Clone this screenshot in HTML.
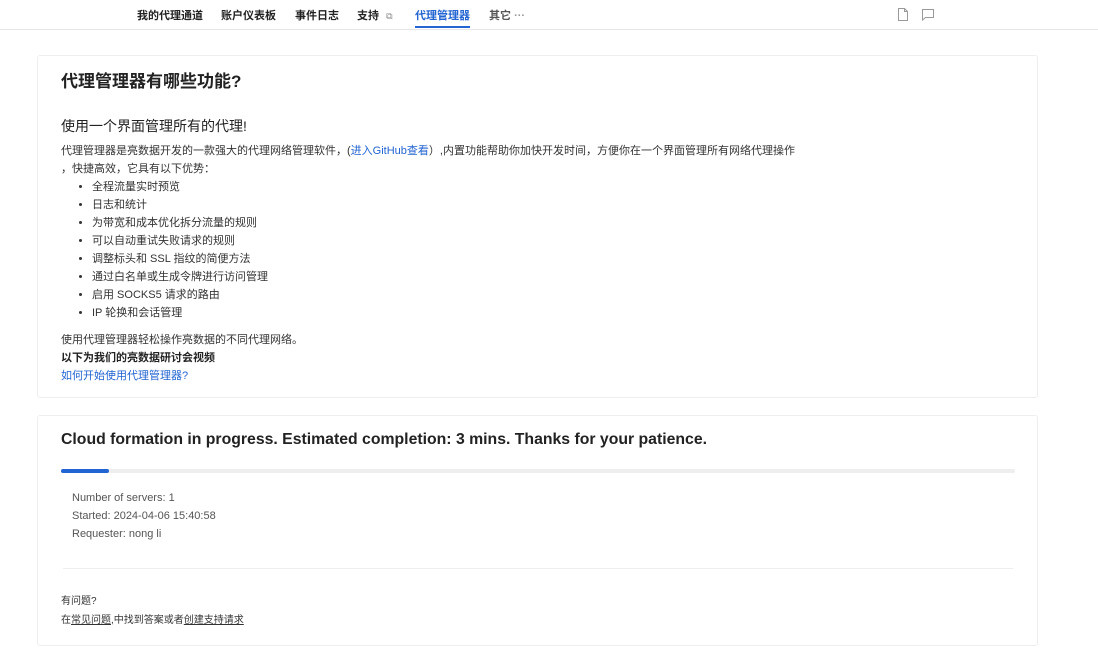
<!DOCTYPE html>
<html><head><meta charset="utf-8"><style>
*{margin:0;padding:0;box-sizing:border-box}
body{width:1098px;height:653px;overflow:hidden;background:#fff;font-family:"Liberation Sans","Noto Sans CJK SC",sans-serif;color:#333;position:relative}
.nav{height:30px;border-bottom:1px solid #e6e6e6;position:relative}
.nav span{position:absolute;top:7px;font-size:11px;color:#222;font-weight:bold}
.nav .act{color:#2264d1}
.card{position:absolute;left:37px;width:1001px;border:1px solid #eee;border-radius:3px;background:#fff}
h1{font-size:17px;font-weight:bold;color:#222;position:absolute;left:23px}
.t{position:absolute;font-size:11px;color:#333;white-space:nowrap}
a{color:#2264d1;text-decoration:none}
ul{position:absolute;left:54px;top:122px;font-size:11px;line-height:18px;list-style:disc;color:#333}
</style></head><body>
<div class="nav">
<span style="left:137px">我的代理通道</span>
<span style="left:221px">账户仪表板</span>
<span style="left:295px">事件日志</span>
<span style="left:357px">支持 <span style="position:static;font-size:9px;color:#888;margin-left:4px;font-weight:normal">⧉</span></span>
<span class="act" style="left:415px">代理管理器</span>
<div style="position:absolute;left:415px;top:26px;width:55px;height:2px;background:#2264d1"></div>
<span style="left:489px;color:#555">其它 <span style="position:static;color:#999">···</span></span>
<svg style="position:absolute;left:897px;top:8px" width="12" height="13" viewBox="0 0 12 13" fill="none" stroke="#999"><path d="M1.5 .5h6l3 3v9h-9z M7.5 .5v3h3"/></svg>
<svg style="position:absolute;left:922px;top:9px" width="13" height="12" viewBox="0 0 13 12" fill="none" stroke="#999"><path d="M.5 .5h11v8h-8l-3 2.5z"/></svg>
</div>
<div class="card" style="top:55px;height:343px">
<h1 style="top:11px">代理管理器有哪些功能?</h1>
<div class="t" style="left:23px;top:60px;font-size:14px;color:#222">使用一个界面管理所有的代理!</div>
<div class="t" style="left:23px;top:86px">代理管理器是亮数据开发的一款强大的代理网络管理软件，(<a>进入GitHub查看</a>）,内置功能帮助你加快开发时间，方便你在一个界面管理所有网络代理操作</div>
<div class="t" style="left:23px;top:104px">，快捷高效，它具有以下优势：</div>
<ul><li>全程流量实时预览</li><li>日志和统计</li><li>为带宽和成本优化拆分流量的规则</li><li>可以自动重试失败请求的规则</li><li>调整标头和 SSL 指纹的简便方法</li><li>通过白名单或生成令牌进行访问管理</li><li>启用 SOCKS5 请求的路由</li><li>IP 轮换和会话管理</li></ul>
<div class="t" style="left:23px;top:275px">使用代理管理器轻松操作亮数据的不同代理网络。</div>
<div class="t" style="left:23px;top:293px;font-weight:bold;color:#222">以下为我们的亮数据研讨会视频</div>
<div class="t" style="left:23px;top:311px"><a>如何开始使用代理管理器?</a></div>
</div>
<div class="card" style="top:415px;height:231px">
<h1 style="top:15px;font-size:15.8px">Cloud formation in progress. Estimated completion: 3 mins. Thanks for your patience.</h1>
<div style="position:absolute;left:23px;top:53px;width:954px;height:4px;background:#eee;border-radius:2px"><div style="width:48px;height:4px;background:#2264d1;border-radius:2px"></div></div>
<div class="t" style="left:34px;top:76px;color:#555">Number of servers: 1</div>
<div class="t" style="left:34px;top:94px;color:#555">Started: 2024-04-06 15:40:58</div>
<div class="t" style="left:34px;top:112px;color:#555">Requester: nong li</div>
<div style="position:absolute;left:25px;top:152px;width:950px;height:1px;background:#eee"></div>
<div class="t" style="left:23px;top:176px;font-size:10px">有问题?</div>
<div class="t" style="left:23px;top:195px;font-size:10px">在<u>常见问题</u>,中找到答案或者<u>创建支持请求</u></div>
</div>
</body></html>
